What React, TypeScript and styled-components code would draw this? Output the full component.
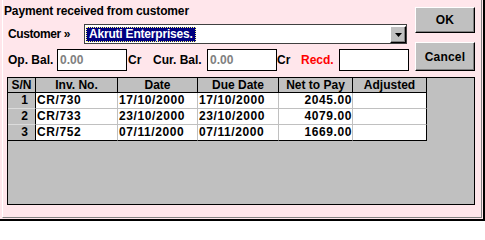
import React from 'react';
import styled, { createGlobalStyle } from 'styled-components';

const GlobalStyle = createGlobalStyle`
  * { box-sizing: border-box; }
  html, body { margin: 0; padding: 0; background: #ffffff; }
  body {
    font-family: "Liberation Sans", Arial, sans-serif;
    font-weight: 700;
    font-size: 12px;
    color: #000;
  }
`;

const Window = styled.div`
  width: 485px;
  height: 221px;
  background: #ffe6eb;
  border-right: 2px solid #000;
  border-bottom: 2px solid #000;
  display: flex;
`;

const Frame = styled.div`
  flex: 1;
  margin: 0 1px 1px 2px;
  border-left: 1px solid #ffffff;
  border-right: 1px solid #808080;
  border-bottom: 1px solid #808080;
  padding: 3px 6px 0 0;
  display: flex;
  flex-direction: column;
`;

const Top = styled.div`
  display: flex;
  justify-content: space-between;
  align-items: flex-start;
`;

const Fields = styled.div`
  display: flex;
  flex-direction: column;
`;

const Title = styled.div`
  height: 16px;
  line-height: 16px;
  padding-left: 1px;
  letter-spacing: -0.15px;
  white-space: nowrap;
`;

const FieldRow = styled.div<{ $h: number }>`
  display: flex;
  align-items: center;
  height: ${p => p.$h}px;
  margin-top: 5px;
  padding-left: 5px;
`;

const Label = styled.span<{ $w: number; $red?: boolean }>`
  width: ${p => p.$w}px;
  flex-shrink: 0;
  white-space: nowrap;
  color: ${p => (p.$red ? '#ff0000' : '#000')};
  letter-spacing: ${p => (p.$w > 70 ? '-0.4px' : '0')};
`;

const Combo = styled.div`
  width: 323px;
  height: 20px;
  border: 1px solid #404040;
  background: #fff;
  display: flex;
  align-items: center;
  padding-left: 1px;
`;

const Selected = styled.span`
  height: 15px;
  line-height: 13px;
  background: #000080;
  color: #fff;
  border: 1px dotted #ffff80;
  padding: 0 2px;
  letter-spacing: -0.2px;
  white-space: nowrap;
`;

const DropButton = styled.div`
  margin-left: auto;
  align-self: flex-end;
  width: 16px;
  height: 17px;
  background: #c0c0c0;
  border-top: 1px solid #fff;
  border-left: 1px solid #fff;
  border-right: 1px solid #000;
  border-bottom: 1px solid #000;
  box-shadow: inset -1px -1px #808080;
  display: flex;
  align-items: center;
  justify-content: center;
`;

const Box = styled.div`
  width: 70px;
  height: 22px;
  flex-shrink: 0;
  border: 1px solid #000;
  background: #fff;
  color: #808080;
  padding-left: 2px;
  line-height: 20px;
`;

const Buttons = styled.div`
  display: flex;
  flex-direction: column;
  gap: 9px;
  margin-top: 4px;
`;

const Button = styled.button<{ $h: number }>`
  width: 60px;
  height: ${p => p.$h}px;
  padding: 0;
  background: #c0c0c0;
  font: inherit;
  color: #000;
  border-top: 1px solid #fff;
  border-left: 1px solid #fff;
  border-right: 1px solid #000;
  border-bottom: 1px solid #000;
  box-shadow: inset -1px -1px #808080;
  letter-spacing: 0.2px;
`;

const Grid = styled.div`
  margin: 6px 0 0 4px;
  width: 468px;
  height: 128px;
  border: 1px solid #000;
  background: #c0c0c0;
`;

const Table = styled.table`
  border-collapse: separate;
  border-spacing: 0;
  table-layout: fixed;
  width: 419px;
`;

const Head = styled.th<{ $w: number }>`
  width: ${p => p.$w}px;
  height: 15px;
  padding: 0;
  line-height: 14px;
  text-align: center;
  font-weight: 700;
  background: #c0c0c0;
  border-right: 1px solid #000;
  border-bottom: 1px solid #000;
  white-space: nowrap;
`;

const Cell = styled.td<{ $align?: 'left' | 'right' }>`
  height: 16px;
  padding: 0 0 0 1px;
  line-height: 15px;
  text-align: ${p => p.$align ?? 'left'};
  background: #fff;
  letter-spacing: 0.6px;
  border-right: 1px solid #c0c0c0;
  border-bottom: 1px solid #c0c0c0;
  white-space: nowrap;

  tr:last-child > & { border-bottom-color: #000; }
  &:last-child { border-right-color: #000; }
`;

const SnCell = styled.td`
  height: 16px;
  padding: 0 7px 0 0;
  line-height: 15px;
  text-align: right;
  background: #c0c0c0;
  border-right: 1px solid #000;
  border-bottom: 1px solid #dcdcdc;

  tr:last-child > & { border-bottom-color: #000; }
`;

const columns = [
  { title: 'S/N', width: 28 },
  { title: 'Inv. No.', width: 82 },
  { title: 'Date', width: 80 },
  { title: 'Due Date', width: 81 },
  { title: 'Net to Pay', width: 74 },
  { title: 'Adjusted', width: 74 },
];

const bills = [
  { inv: 'CR/730', date: '17/10/2000', due: '17/10/2000', net: '2045.00' },
  { inv: 'CR/733', date: '23/10/2000', due: '23/10/2000', net: '4079.00' },
  { inv: 'CR/752', date: '07/11/2000', due: '07/11/2000', net: '1669.00' },
];

const Arrow = () => (
  <svg width="7" height="4" viewBox="0 0 7 4">
    <polygon points="0,0 7,0 3.5,4" fill="#000" />
  </svg>
);

export default function App() {
  return (
    <>
      <GlobalStyle />
      <Window>
        <Frame>
          <Top>
            <Fields>
              <Title>Payment received from customer</Title>
              <FieldRow $h={20}>
                <Label $w={76}>Customer »</Label>
                <Combo>
                  <Selected>Akruti Enterprises.</Selected>
                  <DropButton>
                    <Arrow />
                  </DropButton>
                </Combo>
              </FieldRow>
              <FieldRow $h={22}>
                <Label $w={49}>Op. Bal.</Label>
                <Box>0.00</Box>
                <Label $w={26} style={{ paddingLeft: 1 }}>Cr</Label>
                <Label $w={54}>Cur. Bal.</Label>
                <Box>0.00</Box>
                <Label $w={24}>Cr</Label>
                <Label $w={38} $red>Recd.</Label>
                <Box />
              </FieldRow>
            </Fields>
            <Buttons>
              <Button $h={26}>OK</Button>
              <Button $h={29}>Cancel</Button>
            </Buttons>
          </Top>
          <Grid>
            <Table>
              <thead>
                <tr>
                  {columns.map(c => (
                    <Head key={c.title} $w={c.width}>{c.title}</Head>
                  ))}
                </tr>
              </thead>
              <tbody>
                {bills.map((b, i) => (
                  <tr key={b.inv}>
                    <SnCell>{i + 1}</SnCell>
                    <Cell>{b.inv}</Cell>
                    <Cell>{b.date}</Cell>
                    <Cell>{b.due}</Cell>
                    <Cell $align="right">{b.net}</Cell>
                    <Cell />
                  </tr>
                ))}
              </tbody>
            </Table>
          </Grid>
        </Frame>
      </Window>
    </>
  );
}
